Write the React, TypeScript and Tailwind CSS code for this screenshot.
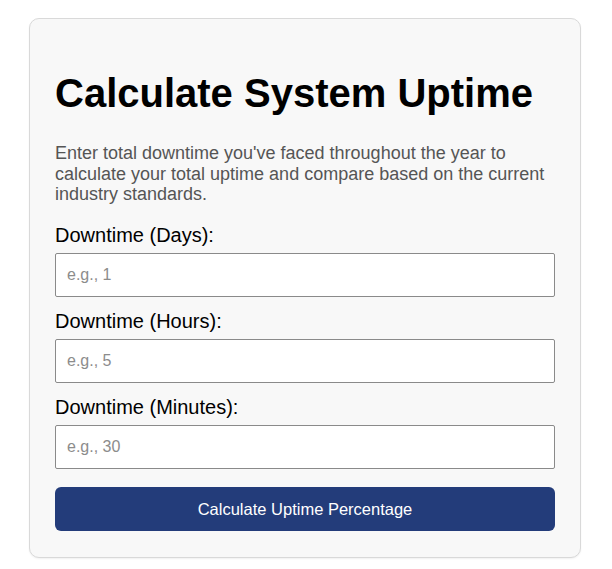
export default function App() {
  const fields = [
    { id: "days", label: "Downtime (Days):", placeholder: "e.g., 1" },
    { id: "hours", label: "Downtime (Hours):", placeholder: "e.g., 5" },
    { id: "minutes", label: "Downtime (Minutes):", placeholder: "e.g., 30" },
  ];

  return (
    <div className="min-h-screen bg-white pt-[18px] font-['Liberation_Sans',Arial,sans-serif]">
      <div className="ml-[29px] w-[552px] rounded-[10px] border border-[#d9d9d9] bg-[#f8f8f8] px-[25px] pb-[26px] pt-[46px] shadow-[0_1px_2px_rgba(0,0,0,0.06)]">
        <h1 className="text-[40px] font-bold leading-[56px] text-black">Calculate System Uptime</h1>

        <p className="mt-[22px] text-[18px] leading-[20.7px] text-[#555]">
          Enter total downtime you've faced throughout the year to calculate your total uptime and compare based on the current industry standards.
        </p>

        <div className="mt-[18px]">
          {fields.map((f) => (
            <div key={f.id}>
              <label htmlFor={f.id} className="block text-[20px] leading-[24px] text-black">
                {f.label}
              </label>
              <input
                id={f.id}
                type="number"
                placeholder={f.placeholder}
                className="mb-[12px] mt-[6px] block h-[44px] w-full rounded-[2px] border border-[#8a8a8a] bg-white px-[11px] text-[16px] text-black placeholder:text-[#8c8c8c] focus:outline-none"
              />
            </div>
          ))}
        </div>

        <button className="mt-[6px] h-[44px] w-full rounded-[6px] bg-[#233c7a] text-[16.5px] text-white">
          Calculate Uptime Percentage
        </button>
      </div>
    </div>
  );
}
